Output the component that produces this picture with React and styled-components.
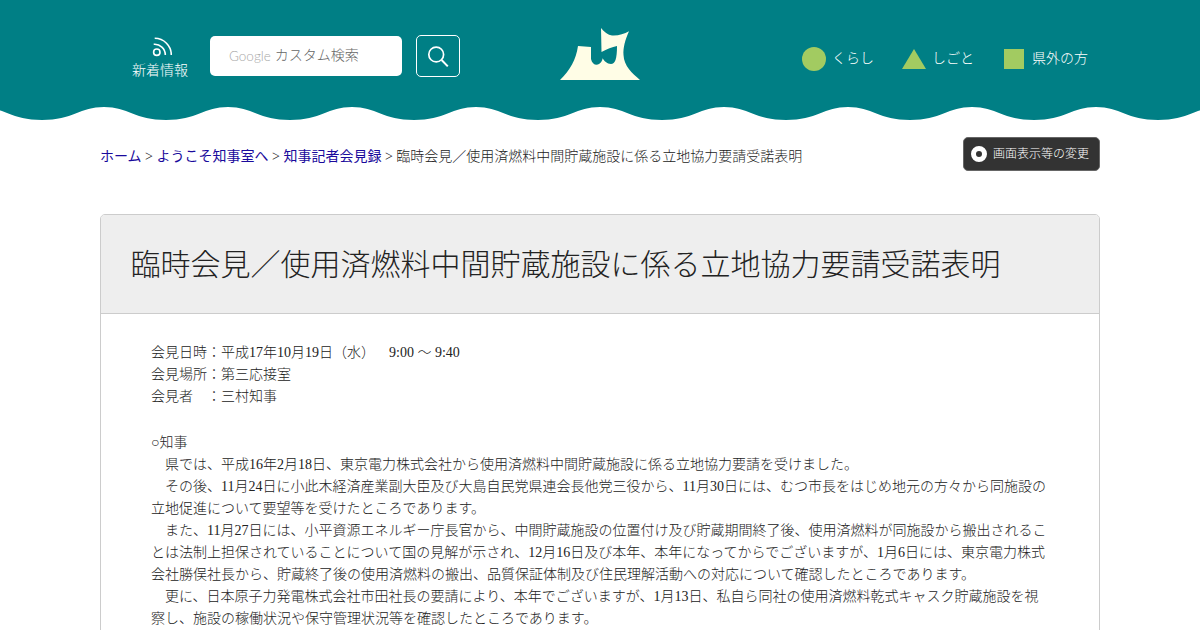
import React from "react";
import styled, { createGlobalStyle } from "styled-components";

const GlobalStyle = createGlobalStyle`
  html, body {
    margin: 0;
    padding: 0;
    background: #fff;
    overflow: hidden;
  }
  body {
    color: #222;
    font-family: "Liberation Serif", "Noto Sans CJK JP", serif;
    font-size: 14px;
    font-weight: 300;
    line-height: 22px;
  }
`;

const Page = styled.div`
  width: 1200px;
  height: 630px;
  overflow: hidden;
`;

const Header = styled.header`
  height: 105px;
  background: #007f85;
  display: flex;
  align-items: flex-start;
  padding-left: 132px;
  box-sizing: border-box;
`;

const FeedLink = styled.a`
  width: 56px;
  margin-top: 37px;
  display: flex;
  flex-direction: column;
  align-items: center;
  color: #fff;
  font-size: 14px;
  line-height: 20px;
  text-decoration: none;
  svg {
    display: block;
    margin-left: 4px;
    margin-bottom: 4px;
  }
`;

const SearchBox = styled.div`
  width: 192px;
  height: 40px;
  margin: 36px 0 0 22px;
  padding-left: 19px;
  box-sizing: border-box;
  background: #fff;
  border-radius: 5px;
  display: flex;
  align-items: center;
  color: #666;
  font-size: 14px;
  .google {
    font-family: "Lato", sans-serif;
    color: #a8a8a8;
    font-size: 13.5px;
    margin-right: 4px;
  }
`;

const SearchButton = styled.button`
  width: 44px;
  height: 42px;
  margin: 35px 0 0 14px;
  padding: 0;
  background: transparent;
  border: 1px solid #fff;
  border-radius: 5px;
  display: flex;
  align-items: center;
  justify-content: center;
`;

const Logo = styled.svg`
  display: block;
  width: 80px;
  height: 52px;
  margin: 28px 0 0 100px;
`;

const Nav = styled.nav`
  display: flex;
  align-items: center;
  height: 24px;
  margin: 47px 0 0 162px;
`;

const NavItem = styled.a`
  display: flex;
  align-items: center;
  color: #fff;
  font-size: 14px;
  margin-right: ${(p) => p.$gap}px;
  gap: ${(p) => p.$inner}px;
`;

const Shape = styled.span`
  display: block;
  background: #a2cb61;
  width: ${(p) => (p.$kind === "square" ? 20 : 24)}px;
  height: ${(p) => (p.$kind === "square" ? 20 : 24)}px;
  border-radius: ${(p) => (p.$kind === "circle" ? "50%" : "0")};
  clip-path: ${(p) =>
    p.$kind === "triangle" ? "polygon(50% 8%, 100% 92%, 0 92%)" : "none"};
`;

const Wave = styled.svg`
  display: block;
  width: 1200px;
  height: 16px;
`;

const Crumbs = styled.div`
  width: 1000px;
  height: 93px;
  margin: 0 auto;
  padding-top: 16px;
  box-sizing: border-box;
  display: flex;
  justify-content: space-between;
  align-items: flex-start;
`;

const Trail = styled.div`
  margin-top: 9px;
  a {
    color: #1a0a9c;
    font-weight: 400;
    text-decoration: none;
  }
`;

const DisplayButton = styled.div`
  width: 137px;
  height: 34px;
  box-sizing: border-box;
  background: #333;
  border: 1px solid #666;
  border-radius: 5px;
  color: #fff;
  font-size: 12px;
  display: flex;
  align-items: center;
  padding-left: 7px;
  gap: 6px;
`;

const Radio = styled.span`
  width: 6px;
  height: 6px;
  background: #333;
  border: 5px solid #fff;
  border-radius: 50%;
`;

const Panel = styled.section`
  width: 1000px;
  margin: 0 auto;
  box-sizing: border-box;
  border: 1px solid #ccc;
  border-radius: 5px 5px 0 0;
`;

const Title = styled.h1`
  margin: 0;
  height: 99px;
  box-sizing: border-box;
  padding: 0 29.5px;
  background: #eee;
  border-bottom: 1px solid #ccc;
  border-radius: 4px 4px 0 0;
  font-size: 30px;
  font-weight: 300;
  line-height: 100px;
`;

const Body = styled.div`
  padding: 28px 50px 0;
  p {
    margin: 0;
  }
`;

const Gap = styled.div`
  height: 24px;
`;

export default function App() {
  return (
    <Page>
      <GlobalStyle />
      <Header>
        <FeedLink href="#">
          <svg width="20" height="20" viewBox="0 0 20 20" fill="none" stroke="#fff" strokeWidth="1.6">
            <circle cx="4.8" cy="15.2" r="3.2" />
            <path d="M1.7 7.3a10.6 10.6 0 0 1 11.6 10.7" />
            <path d="M2.7 1.3a16.6 16.6 0 0 1 16.6 16.7" />
          </svg>
          新着情報
        </FeedLink>
        <SearchBox>
          <span className="google">Google</span>カスタム検索
        </SearchBox>
        <SearchButton aria-label="検索">
          <svg width="22" height="24" viewBox="0 0 22 24" fill="none" stroke="#fff" strokeWidth="1.7">
            <circle cx="9.2" cy="10.5" r="7.4" />
            <path d="M14.6 16l6.2 6.4" strokeWidth="2" />
          </svg>
        </SearchButton>
        <Logo viewBox="0 0 80 52">
          <path
            fill="#fffde6"
            d="M0 52 C10 42 16 32 18 18 L31 19 L31 31 C32 36 36 38 39 36 C41 35 42 33 42.7 30.3 C44 33 47 36 51 36 C55 36 57 31 57 18 C52 19 47 21 41.5 24 L41 0 C44 4 48 7 52 7.5 C58 8 64 6 69 3.3 C65 12 63 20 63.5 27 C64 38 72 45 80 52 Z"
          />
        </Logo>
        <Nav>
          <NavItem $gap={28} $inner={6}>
            <Shape $kind="circle" />
            くらし
          </NavItem>
          <NavItem $gap={30} $inner={6}>
            <Shape $kind="triangle" />
            しごと
          </NavItem>
          <NavItem $gap={0} $inner={8}>
            <Shape $kind="square" />
            県外の方
          </NavItem>
        </Nav>
      </Header>
      <Wave viewBox="0 0 1200 16" preserveAspectRatio="none">
        <defs>
          <pattern id="wave" width="124" height="16" patternUnits="userSpaceOnUse" x="-20">
            <path
              fill="#007f85"
              d="M0 0 H124 V2 C100 2 93 15 62 15 C31 15 24 2 0 2 Z"
            />
          </pattern>
        </defs>
        <rect width="1200" height="16" fill="url(#wave)" />
      </Wave>
      <Crumbs>
        <Trail>
          <a href="#">ホーム</a> &gt; <a href="#">ようこそ知事室へ</a> &gt;{" "}
          <a href="#">知事記者会見録</a> &gt;{" "}
          臨時会見／使用済燃料中間貯蔵施設に係る立地協力要請受諾表明
        </Trail>
        <DisplayButton>
          <Radio />
          画面表示等の変更
        </DisplayButton>
      </Crumbs>
      <Panel>
        <Title>臨時会見／使用済燃料中間貯蔵施設に係る立地協力要請受諾表明</Title>
        <Body>
          <p>会見日時：平成17年10月19日（水）　&nbsp;&nbsp;9:00 〜 9:40</p>
          <p>会見場所：第三応接室</p>
          <p>会見者　：三村知事</p>
          <Gap />
          <p>○知事</p>
          <p>　県では、平成16年2月18日、東京電力株式会社から使用済燃料中間貯蔵施設に係る立地協力要請を受けました。</p>
          <p>　その後、11月24日に小此木経済産業副大臣及び大島自民党県連会長他党三役から、11月30日には、むつ市長をはじめ地元の方々から同施設の立地促進について要望等を受けたところであります。</p>
          <p>　また、11月27日には、小平資源エネルギー庁長官から、中間貯蔵施設の位置付け及び貯蔵期間終了後、使用済燃料が同施設から搬出されることは法制上担保されていることについて国の見解が示され、12月16日及び本年、本年になってからでございますが、1月6日には、東京電力株式会社勝俣社長から、貯蔵終了後の使用済燃料の搬出、品質保証体制及び住民理解活動への対応について確認したところであります。</p>
          <p>　更に、日本原子力発電株式会社市田社長の要請により、本年でございますが、1月13日、私自ら同社の使用済燃料乾式キャスク貯蔵施設を視察し、施設の稼働状況や保守管理状況等を確認したところであります。</p>
        </Body>
      </Panel>
    </Page>
  );
}
